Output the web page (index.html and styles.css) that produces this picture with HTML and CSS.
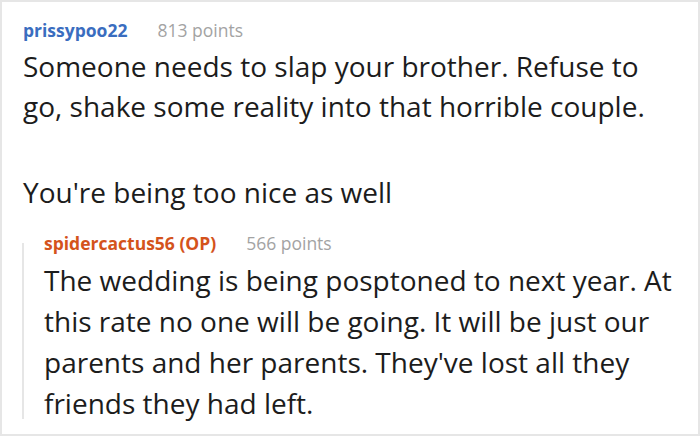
FILE: index.html
```html
<!DOCTYPE html>
<html>
<head>
<meta charset="utf-8">
<link rel="stylesheet" href="styles.css">
</head>
<body>
<div class="frame">
  <div class="comment">
    <div class="meta"><span class="user">prissypoo22</span><span class="points">813 points</span></div>
    <div class="text">
      <p>Someone needs to slap your brother. Refuse to go, shake some reality into that horrible couple.</p>
      <p>You're being too nice as well</p>
    </div>
    <div class="reply">
      <div class="meta"><span class="user op">spidercactus56 (OP)</span><span class="points">566 points</span></div>
      <div class="text">
        <p>The wedding is being posptoned to next year. At this rate no one will be going. It will be just our parents and her parents. They've lost all they friends they had left.</p>
      </div>
    </div>
  </div>
</div>
</body>
</html>
```
FILE: styles.css
```css
html, body { margin: 0; padding: 0; background: #fff; }
.frame {
  width: 700px; height: 436px; box-sizing: border-box;
  border: 2px solid #e6e6e6;
  padding: 15px 20px 0 21px;
  overflow: hidden;
  font-family: "Open Sans", "Noto Sans", sans-serif;
  color: #1c1c1c;
}
.meta { font-size: 17.5px; line-height: 26px; white-space: nowrap; }
.user { font-weight: 700; color: #3a6dbf; }
.user.op { color: #d4531c; }
.points { color: #a3a3a3; margin-left: 30px; }
.comment > .text { margin-top: 3px; }
.text { font-size: 28px; line-height: 40px; }
.text p { margin: 0 0 46px 0; }
.text p:last-child { margin-bottom: 0; }
.reply { position: relative; margin-top: 18px; padding-left: 21px; }
.reply::before {
  content: ""; position: absolute; left: -1px; top: 13px; bottom: 5px;
  width: 2px; background: #e6e6e6;
}
.reply .text { margin-top: 3.5px; line-height: 41px; }
```
